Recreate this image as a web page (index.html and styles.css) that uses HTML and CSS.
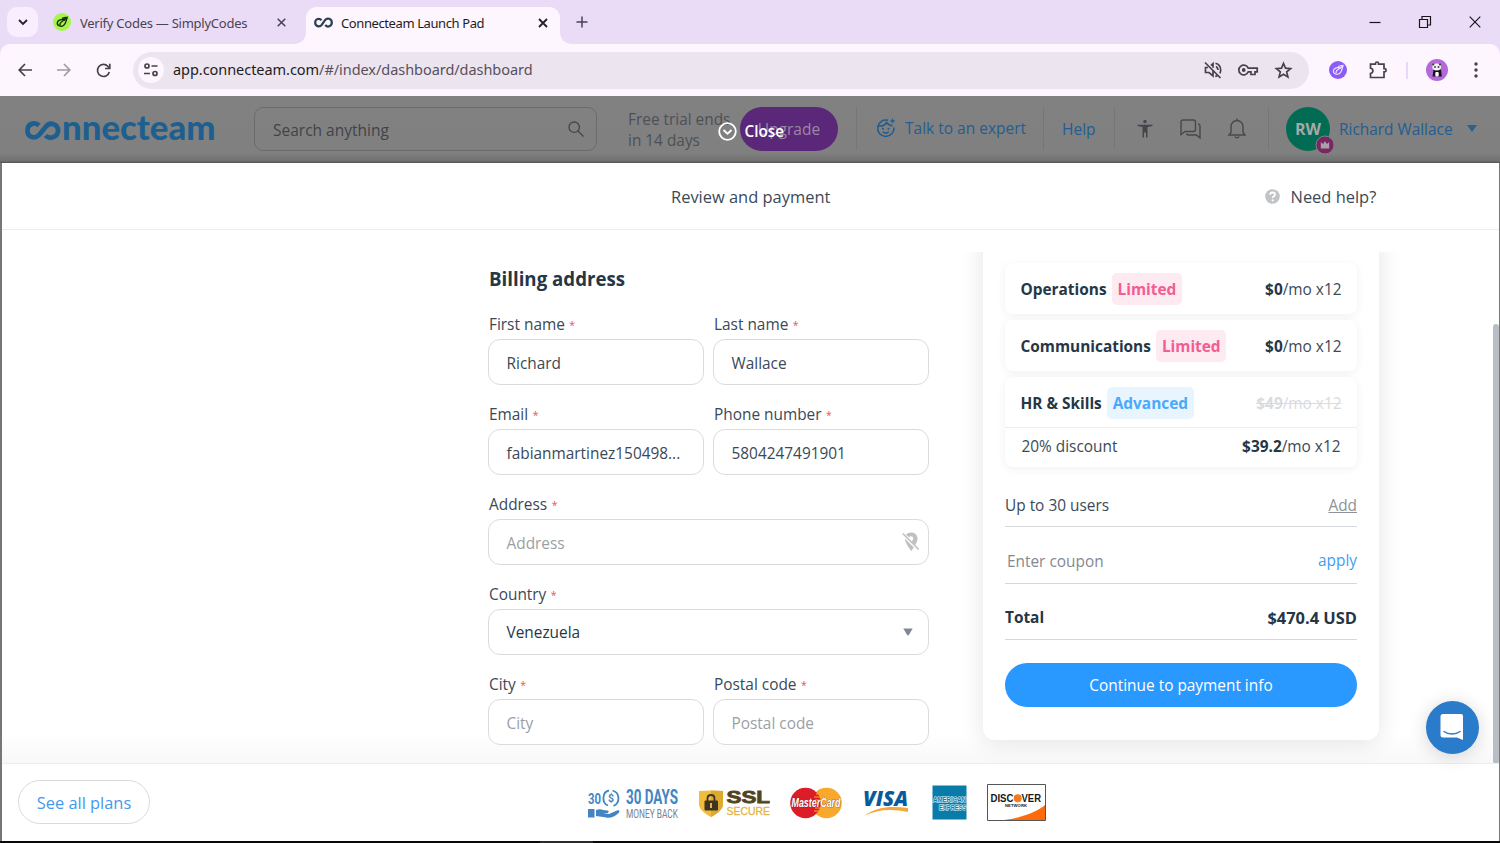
FILE: index.html
```html
<!DOCTYPE html>
<html lang="en">
<head>
<meta charset="utf-8">
<title>Connecteam Launch Pad</title>
<link rel="stylesheet" href="styles.css">
</head>
<body>
<div class="browser">
  <div class="tabstrip">
    <div class="tab-search"><svg width="10" height="7" viewBox="0 0 10 7"><path d="M1 1l4 4 4-4" class="ink"/></svg></div>
    <div class="tab">
      <svg width="18" height="18" viewBox="0 0 18 18"><circle cx="9" cy="9" r="9" fill="#a5f54b"/><path d="M12 7.500C9 5.500 4.500 7 4.300 10s4 4 6.200 2.500S13 8.500 14 4.800L9 8.500c-2 1.500-2.500 2.500-1.500 3.500M9 5.500l4.500-1.200" fill="none" stroke="#19310d" stroke-width="1.400"/></svg>
      <span class="tab-title muted">Verify Codes — SimplyCodes</span>
      <svg class="x1" width="9" height="9" viewBox="0 0 9 9"><path d="M.7.7l7.600 7.600M8.300.7L.7 8.300" class="ink thin"/></svg>
    </div>
    <div class="tab active">
      <svg width="19" height="12" viewBox="0 0 19 12"><path d="M7.500 3.200C5.500.7 1.200 1.700 1.200 5.500s4.300 5.200 6.500 2.300l3.300-4.600c2.300-3 6.800-1.500 6.800 2.300S13.500 11 11.300 7.800" fill="none" stroke="#2b3f50" stroke-width="2.200"/></svg>
      <span class="tab-title on">Connecteam Launch Pad</span>
      <svg class="x2" width="10" height="10" viewBox="0 0 10 10"><path d="M1 1l8 8M9 1L1 9" class="ink"/></svg>
    </div>
    <svg class="plus" width="12" height="12" viewBox="0 0 12 12"><path d="M6 .5v11M.5 6h11" class="ink thin"/></svg>
    <div class="win">
      <svg width="12" height="12" viewBox="0 0 12 12"><path d="M.5 6.500h11" class="hair"/></svg>
      <svg width="12" height="12" viewBox="0 0 12 12"><path d="M.5 3.500h8v8h-8zM3 3.500v-3h8.500V9h-3" class="hair"/></svg>
      <svg width="12" height="12" viewBox="0 0 12 12"><path d="M.7.7l10.600 10.600M11.300.7L.7 11.300" class="hair"/></svg>
    </div>
  </div>

  <div class="toolbar">
    <svg width="14" height="14" viewBox="0 0 14 14"><path d="M14 7H1.500M7 1L1.200 7 7 13" class="nav"/></svg>
    <svg class="fwd" width="14" height="14" viewBox="0 0 14 14"><path d="M0 7h12.500M7 1l5.800 6L7 13" class="nav"/></svg>
    <svg class="reload" width="15" height="15" viewBox="0 0 15 15"><path d="M13.300 9A6 6 0 1 1 12 3.500L13.500 5M13.800.8v4.700H9" class="nav"/></svg>
    <div class="omnibox">
      <div class="site"><svg width="16" height="14" viewBox="0 0 16 14"><circle cx="4" cy="3" r="2" class="nav"/><path d="M8.500 3h6M1 10.500h6" class="nav"/><circle cx="12" cy="10.500" r="2" class="nav"/></svg></div>
      <span class="url">app.connecteam.com<i>/#/index/dashboard/dashboard</i></span>
      <svg width="18" height="18" viewBox="0 0 18 18"><path d="M1 1.500l15.500 15.500M4 6.500H1.500v5H5l4 3.500V9M7 4.500l2-1.800v4M12 5.500c1.300.8 2 1.800 2 3.500M11.500 2.200c3.600 1 5.200 3.600 5.200 6.800 0 1.300-.3 2.300-.8 3.300M11.300 15.500l2-.9" class="nav"/></svg>
      <svg class="key" width="20" height="12" viewBox="0 0 20 12"><path d="M10.300 4.200A4.900 4.900 0 1 0 10.300 7.800H13v2.700h4V7.800h2.200V4.200z" class="nav"/><circle cx="5.700" cy="6" r="1.900" fill="#474249"/></svg>
      <svg class="star" width="17" height="16" viewBox="0 0 17 16"><path d="M8.500 1.500l2 4.700 5.100.4-3.900 3.300 1.200 5-4.400-2.700-4.400 2.700 1.200-5L1.400 6.600l5.100-.4z" class="nav"/></svg>
    </div>
    <svg class="ext" width="18" height="18" viewBox="0 0 18 18"><circle cx="9" cy="9" r="9" fill="#8b5cf6"/><path d="M12 7.500C9 5.500 4.500 7 4.300 10s4 4 6.200 2.500S13 8.500 14 4.800L9 8.500c-2 1.500-2.500 2.500-1.500 3.500M9 5.500l4.500-1.200" fill="none" stroke="#f3eaff" stroke-width="1.100"/></svg>
    <svg class="puzzle" width="18" height="18" viewBox="0 0 18 18"><path d="M1.500 3.200h5V2.500a1.500 1.500 0 0 1 3 0v.7h5.500v4.500h.5a1.600 1.600 0 0 1 0 3.200H15v5.600H1.500v-4c3.200-.7 3.200-4.800 0-5.400z" class="nav"/></svg>
    <span class="bar"></span>
    <svg class="panda" width="22" height="22" viewBox="0 0 22 22"><circle cx="11" cy="11" r="11" fill="#b36ad8"/><path d="M7.500 10.500h7.500l.8 7H6.500z" fill="#17131b"/><ellipse cx="10.700" cy="8" rx="4.400" ry="3.400" fill="#f5f0f5"/><circle cx="7.300" cy="5.500" r="1" fill="#333"/><circle cx="14" cy="5.500" r="1" fill="#333"/><ellipse cx="9" cy="8" rx="1" ry=".7"/><ellipse cx="12.500" cy="8" rx="1" ry=".7"/><rect x="9.300" y="13" width="3.400" height="4.500" rx="1" fill="#fff"/></svg>
    <svg class="dots" width="4" height="16" viewBox="0 0 4 16"><g fill="#474249"><circle cx="2" cy="2" r="1.700"/><circle cx="2" cy="8" r="1.700"/><circle cx="2" cy="14" r="1.700"/></g></svg>
  </div>
</div>

<div class="app">
  <header class="apphead">
    <svg class="logo" width="192" height="30" viewBox="0 0 192 30"><path d="M15 11.500C11 7.500 3.500 9.500 3.500 16.500S11 25.500 15.500 20.500l6.500-8C26 7.500 34 10 34 16.500S25.500 26 21.500 21.500" fill="none" stroke="#1d6090" stroke-width="4.800"/><text x="38" y="25.500" textLength="153.500" lengthAdjust="spacingAndGlyphs" class="logotext">nnecteam</text></svg>
    <div class="search"><span>Search anything</span><svg width="16" height="16" viewBox="0 0 16 16"><circle cx="6.200" cy="6.200" r="5.200" class="gl"/><path d="M10 10l5.500 5.500" class="gl"/></svg></div>
    <div class="trial">Free trial ends<br>in 14 days</div>
    <div class="upgrade">Upgrade</div>
    <span class="sep s1"></span>
    <div class="expert"><svg width="20" height="20" viewBox="0 0 20 20"><path d="M12 2.300A8.200 8.200 0 1 0 18 9.500M2.500 8C6 8.500 9 7 10.500 4.500c1.500 2 3.500 3.200 6 3.300M6.800 13.800c1.800 1.600 4.300 1.600 6 0" fill="none" stroke="#205b90" stroke-width="1.500"/><circle cx="7" cy="10.700" r="1" fill="#205b90"/><circle cx="12.500" cy="10.700" r="1" fill="#205b90"/><path d="M16.500 0l.8 2.200 2.200.8-2.200.8-.8 2.200-.8-2.200-2.200-.8 2.200-.8z" fill="#205b90"/></svg><span>Talk to an expert</span></div>
    <span class="sep"></span>
    <div class="help">Help</div>
    <span class="sep"></span>
    <div class="tools">
      <svg width="16" height="20" viewBox="0 0 16 20"><circle cx="8" cy="2.500" r="1.700" fill="#43464b"/><path d="M.5 5.700h15v1.400L10.500 8v10.500H9v-5H7v5H5.500V8L.5 7.100z" fill="#43464b"/></svg>
      <svg width="21" height="20" viewBox="0 0 21 20"><path d="M3 1h10.500a2 2 0 0 1 2 2v7.500a2 2 0 0 1-2 2H5l-4 3V3a2 2 0 0 1 2-2zM18 5h.2a2 2 0 0 1 1.800 2v12l-3.500-3H8.500a2 2 0 0 1-2-1.500" class="gl"/></svg>
      <svg width="18" height="21" viewBox="0 0 18 21"><path d="M9 .5v2M1 17h16l-2-2.500V8.500a6 6 0 0 0-12 0v6zM7 18.500c.7 1.800 3.300 1.800 4 0" class="gl"/></svg>
    </div>
    <span class="sep s2"></span>
    <div class="avatar">RW<svg class="crown" width="20" height="20" viewBox="0 0 20 20"><circle cx="10" cy="10" r="9" fill="#792760" stroke="#858087"/><path d="M5.800 7l2.200 2 2-2.700L12 9l2.200-2v6.500H5.800z" fill="#aaa0a9"/></svg></div>
    <span class="name">Richard Wallace</span>
    <svg class="caret" width="10" height="7" viewBox="0 0 10 7"><path d="M0 0h10L5 7z" fill="#29628f"/></svg>
    <div class="close"><svg width="19" height="19" viewBox="0 0 19 19"><circle cx="9.500" cy="9.500" r="8.300" fill="none" stroke="#fff" stroke-width="1.800"/><path d="M5.500 8l4 3.700 4-3.700" fill="none" stroke="#fff" stroke-width="1.800"/></svg><b>Close</b></div>
  </header>

  <main class="modal">
    <div class="modalhead"><span class="title">Review and payment</span><span class="need"><svg width="15" height="15" viewBox="0 0 15 15"><circle cx="7.500" cy="7.500" r="7.300" fill="#c2c3c6"/><path d="M5.100 5.800c.1-3.200 4.900-2.900 4.900-.3 0 1.700-2.300 1.700-2.300 3.400" fill="none" stroke="#fff" stroke-width="1.800"/><circle cx="7.700" cy="11.300" r="1.100" fill="#fff"/></svg><span>Need help?</span></span></div>
    <div class="scroll">
      <section class="form">
        <h2>Billing address</h2>
        <div class="grid">
          <label><span>First name <em>*</em></span><div class="input">Richard</div></label>
          <label><span>Last name <em>*</em></span><div class="input">Wallace</div></label>
          <label><span>Email <em>*</em></span><div class="input email">fabianmartinez150498...</div></label>
          <label><span>Phone number <em>*</em></span><div class="input">5804247491901</div></label>
          <label class="wide"><span>Address <em>*</em></span><div class="input ph">Address<svg width="18" height="20" viewBox="0 0 18 20"><path d="M4 3c3-4.300 11.500-2.800 11.500 3.500 0 2-.9 4.200-2.200 6.500l-3.800-3.800q2-1 1.800-3c-.3-2-2.300-2.700-4.300-1.200zM2.800 6.500l9 9L9.300 19C6 14.500 3 10.500 2.800 6.500z" fill="#bfc0c2"/><path d="M.8 1.500l16 16" stroke="#bfc0c2" stroke-width="1.700"/></svg></div></label>
          <label class="wide"><span>Country <em>*</em></span><div class="input sel">Venezuela<svg width="10" height="8" viewBox="0 0 10 8"><path d="M.3.500h9.400L6 6.800q-1 1.200-2 0z" fill="#818892"/></svg></div></label>
          <label><span>City <em>*</em></span><div class="input ph">City</div></label>
          <label><span>Postal code <em>*</em></span><div class="input ph">Postal code</div></label>
        </div>
      </section>
      <aside class="summary">
        <div class="plan"><div class="line"><strong>Operations</strong><span class="tag pink">Limited</span><span class="price"><b>$0</b>/mo x12</span></div></div>
        <div class="plan"><div class="line"><strong>Communications</strong><span class="tag pink">Limited</span><span class="price"><b>$0</b>/mo x12</span></div></div>
        <div class="plan"><div class="line hr"><strong>HR &amp; Skills</strong><span class="tag blue">Advanced</span><span class="price old"><b>$49</b>/mo x12</span></div>
          <div class="discount"><span>20% discount</span><span><b>$39.2</b>/mo x12</span></div></div>
        <div class="row users"><span>Up to 30 users</span><u>Add</u></div>
        <div class="row coupon"><span>Enter coupon</span><a>apply</a></div>
        <div class="row total"><b>Total</b><b class="sum">$470.4 USD</b></div>
        <div class="cta">Continue to payment info</div>
      </aside>
      <span class="thumb"></span>
    </div>
    <footer>
      <div class="plans">See all plans</div>
      <div class="badges">
        <svg width="92" height="34" viewBox="0 0 92 34"><g class="cond" fill="#4385c2"><text x="0" y="18" font-size="15.500" textLength="13" lengthAdjust="spacingAndGlyphs">30</text><text x="38" y="18" font-size="20.500" textLength="52" lengthAdjust="spacingAndGlyphs">30 DAYS</text><text x="20" y="16" font-size="11" textLength="6" lengthAdjust="spacingAndGlyphs">$</text></g><text x="38" y="31.500" font-size="13.500" fill="#7a828a" textLength="52" lengthAdjust="spacingAndGlyphs" class="thincond">MONEY BACK</text><path d="M21 4.500c-7 1.500-7.500 12.500-1 15M24.500 4.500c7.500 2 8 12.500 1 15.300" fill="none" stroke="#4385c2" stroke-width="1.800"/><path d="M0 23h6.500v8.500H0zM8 24c5-2 7 .5 11 .5 2.500 0 2 2.500 0 2.500h-4l6 1 8-3.500c3-.8 3 1.500 1 3-5 4-8 5-13 3.700L8 30z" fill="#4385c2"/></svg>
        <svg class="ssl" width="74" height="32" viewBox="0 0 74 32"><path d="M1 4q12-1 24 0v13c0 6-7 10.500-12 13C8 27.500 1 23 1 17z" fill="#f0bd3d"/><path d="M13 3.500q6 0 12 .5v13c0 6-7 10.500-12 13z" fill="#dda92f"/><path d="M9.500 14v-2.500c0-4.700 7-4.700 7 0V14" fill="none" stroke="#3d3421" stroke-width="1.800"/><rect x="6.500" y="13.500" width="13.500" height="10" rx="1" fill="#3d3421"/><path d="M13 16v5" stroke="#e8b540" stroke-width="2"/><text x="28.500" y="15.500" font-size="17" textLength="43.500" lengthAdjust="spacingAndGlyphs" class="heavy ssltext">SSL</text><text x="28.500" y="27.500" font-size="11.500" textLength="43.500" lengthAdjust="spacingAndGlyphs" class="med secure">SECURE</text></svg>
        <svg class="mc" width="52" height="32" viewBox="0 0 52 32"><circle cx="36.500" cy="16" r="15.300" fill="#f8a92b"/><circle cx="15.500" cy="16" r="15.300" fill="#dc1c27"/><path d="M26 7h5M24 10h8M25 13h8M25 21h8M24 24h8M26 27h4" stroke="#f8a92b" stroke-width="1.200"/><text x="1.500" y="20" textLength="49" lengthAdjust="spacingAndGlyphs" class="mcard">MasterCard</text></svg>
        <svg class="visa" width="48" height="30" viewBox="0 0 48 30"><text x="1" y="17.500" font-size="21" textLength="45" lengthAdjust="spacingAndGlyphs" class="visat">VISA</text><path d="M2 28C15 18 30 18 46 20v4C30 20.500 16 21 2 28z" fill="#f0a83b"/></svg>
        <svg class="amex" width="35" height="35" viewBox="0 0 35 35"><path d="M.5.5h34v34H.5z" fill="#087ba8"/><text x="1" y="17" font-size="7.500" textLength="33" lengthAdjust="spacingAndGlyphs" class="am">AMERICAN</text><text x="7" y="24.500" font-size="7.500" textLength="27.500" lengthAdjust="spacingAndGlyphs" class="am">EXPRESS</text></svg>
        <svg class="disc" width="59" height="37" viewBox="0 0 59 37"><path d="M.5.5h58v36H.5z" fill="#fff" stroke="#555"/><path d="M58 21v15H17C33 34 48 29 58 21z" fill="#ff6b0b"/><g class="heavy" fill="#17181a"><text x="3.500" y="18" font-size="11.500" textLength="23" lengthAdjust="spacingAndGlyphs">DISC</text><text x="34.500" y="18" font-size="11.500" textLength="19.500" lengthAdjust="spacingAndGlyphs">VER</text><text x="18" y="23.300" font-size="4.200" textLength="22" lengthAdjust="spacing">NETWORK</text></g><circle cx="30.700" cy="14.200" r="4" fill="#f47920"/></svg>
      </div>
    </footer>
    <div class="chat"><svg width="26" height="28" viewBox="0 0 26 28"><path d="M4 1h18a2 2 0 0 1 2 2v24l-6-2.500H4a2.500 2.500 0 0 1-2.500-2.500V3.500A2.500 2.500 0 0 1 4 1z" fill="#fff"/><path d="M5 18.500c4.500 3.300 11.500 3.300 16 0" fill="none" stroke="#2a7bc9" stroke-width="1.500" stroke-linecap="round"/></svg></div>
  </main>
  <div class="taskbar"><span></span></div>
</div>
</body>
</html>
```
FILE: styles.css
```css
* { box-sizing: border-box; }
body { margin: 0; width: 1500px; height: 843px; overflow: hidden; font-family: "Open Sans", sans-serif; background: #fff; color: #3b4957; }
svg { display: block; flex: none; overflow: visible; }
span, b, strong, div { white-space: nowrap; }

/* browser chrome */
.browser { height: 96px; background: #eadcf6; font-family: "Noto Sans", sans-serif; }
.tabstrip { display: flex; align-items: center; height: 44px; padding-left: 7px; }
.tab-search { width: 31px; height: 30px; border-radius: 10px; background: #f8eefe; display: flex; align-items: center; justify-content: center; margin-right: 15px; }
.ink { fill: none; stroke: #28242c; stroke-width: 1.900; }
.thin { stroke: #49424f; stroke-width: 1.500; }
.hair { fill: none; stroke: #17151a; stroke-width: 1.200; }
.tab { display: flex; align-items: center; }
.tab-title { font-size: 13px; letter-spacing: -.25px; line-height: 20px; margin-left: 9px; padding-top: 1px; color: #1f1c22; }
.tab-title.muted { width: 197px; color: #4b4352; }
.tab-title.on { width: 197px; margin-left: 8px; letter-spacing: -.4px; }
.tab.active { align-self: flex-end; height: 37px; width: 254px; margin-left: 20px; padding: 0 0 6px 8px; border-radius: 11px 11px 0 0; background: #fdf6fe; position: relative; }
.tab.active::before, .tab.active::after { content: ""; position: absolute; bottom: 0; width: 11px; height: 11px; }
.tab.active::before { left: -11px; background: radial-gradient(circle at 0 0, transparent 10.500px, #fdf6fe 11px); }
.tab.active::after { right: -11px; background: radial-gradient(circle at 100% 0, transparent 10.500px, #fdf6fe 11px); }
.plus { margin-left: 16px; }
.win { display: flex; gap: 38px; margin-left: auto; margin-right: 19px; }
.toolbar { display: flex; align-items: center; height: 52px; background: #fdf6fe; border-radius: 10px 10px 0 0; padding-left: 18px; }
.nav { fill: none; stroke: #474249; stroke-width: 1.700; }
.fwd { margin-left: 25px; opacity: .5; }
.reload { margin-left: 25px; }
.omnibox { display: flex; align-items: center; width: 1176px; height: 37px; border-radius: 19px; background: #ece5f0; margin-left: 22px; padding-left: 5px; }
.site { width: 26px; height: 26px; border-radius: 50%; background: #fdf6fe; display: flex; align-items: center; justify-content: center; }
.url { width: 1031px; margin-left: 9px; font-size: 14.500px; letter-spacing: -.05px; line-height: 22px; padding-bottom: 2px; color: #1f1c22; }
.url i { font-style: normal; color: #57505c; }
.key { margin-left: 16px; }
.star { margin-left: 17px; }
.ext { margin-left: 20px; }
.puzzle { margin-left: 22px; }
.bar { width: 2px; height: 17px; background: #e7d8f7; margin-left: 19px; }
.panda { margin-left: 18px; }
.dots { margin-left: 26px; }

/* dimmed application header */
.app { height: 747px; background: #777; }
.apphead { position: relative; height: 67px; padding: 0 0 2px 24px; display: flex; align-items: center; background: linear-gradient(#828182 0, #808080 85%, #707070 97%, #505050 100%); font-size: 15.500px; color: #4d5054; }
.logotext { font-family: Lato, sans-serif; font-weight: 900; font-size: 34px; fill: #1d6090; }
.search { width: 343px; height: 44px; margin-left: 38px; padding: 2px 12px 0 18px; display: flex; align-items: center; justify-content: space-between; border: 1px solid #6b6b6c; border-radius: 9px; color: #414347; }
.search svg { margin-bottom: 2px; }
.trial { width: 112px; margin-left: 31px; font-size: 15.400px; line-height: 21px; padding-top: 2px; }
.gl { fill: none; stroke: #45484d; stroke-width: 1.400; }
.upgrade { width: 98px; height: 44px; border-radius: 22px; background: #5a2779; color: #9a88a4; display: flex; align-items: center; justify-content: center; }
.sep { width: 1px; height: 43px; background: #757677; }
.s1 { margin-left: 18px; }
.expert { width: 186px; display: flex; align-items: center; gap: 9px; padding: 0 0 2px 19px; color: #235d91; }
.help { width: 70px; padding-left: 18px; color: #235d91; }
.tools { width: 153px; display: flex; align-items: center; gap: 27px; padding-left: 22px; }
.avatar { position: relative; width: 44px; height: 44px; border-radius: 50%; margin-left: 17px; background: #026b53; color: #a5aaa8; font-size: 16px; font-weight: 700; display: flex; align-items: center; justify-content: center; }
.crown { position: absolute; left: 29px; top: 28px; }
.name { width: 126px; margin-left: 9px; font-size: 15.400px; color: #235d91; padding-top: 1px; }
.caret { margin-left: 2px; }
.close { position: absolute; left: 718px; top: 24px; display: flex; align-items: center; gap: 7.500px; color: #fff; font-size: 15.300px; line-height: 22px; }
.close b { font-weight: 600; }

/* checkout modal */
.modal { position: relative; width: 1497px; height: 678px; margin-left: 2px; background: #fff; }
.modalhead { display: flex; align-items: center; height: 67px; border-bottom: 1px solid #ececec; font-size: 16.450px; padding-top: 1px; }
.title { width: 594px; margin-left: 669px; }
.need { display: flex; align-items: center; gap: 10.500px; }
.scroll { position: relative; display: flex; align-items: flex-start; height: 512px; margin-top: 22px; overflow: hidden; border-bottom: 1px solid #ededed; background: linear-gradient(#fff 480px, #f8f8f8 511px); }
.form { width: 441px; margin-left: 486px; padding-top: 14px; }
.form h2 { margin: 0; font-size: 18.700px; line-height: 26px; color: #253746; padding-left: 1px; }
.grid { display: grid; grid-template-columns: 216px 216px; column-gap: 9px; margin-top: 22px; }
label { display: block; height: 90px; font-size: 15.400px; }
label > span { display: block; height: 25px; line-height: 22px; padding-left: 1px; }
em { color: #f0504e; font-style: normal; font-size: 10.500px; position: relative; top: -1px; margin-left: .5px; }
.wide { grid-column: span 2; }
.input { height: 46px; border: 1px solid #d9dbde; border-radius: 12px; background: #fff; display: flex; align-items: center; justify-content: space-between; padding: 2px 8px 0 17.500px; }
.input svg { margin-bottom: 2px; }
.ph { color: #9b9fa5; }
.sel { padding: 1px 15px 0 17.500px; color: #253746; }
.summary { width: 396px; height: 508px; margin: -20px 0 0 54px; padding: 31px 22px 0; border-radius: 12px; background: #fff; box-shadow: 0 2px 24px rgba(0,0,0,.11); font-size: 15.400px; }
.plan { margin-bottom: 6px; border-radius: 8px; box-shadow: 0 2px 10px rgba(0,0,0,.06); background: #fff; }
.line { display: flex; align-items: center; height: 51px; padding: 1px 15.500px 0; }
.line.hr { height: 50px; padding-top: 2px; }
.line strong, .price { padding-top: 1px; }
.plan strong, .summary b { color: #253746; }
.tag { height: 32px; line-height: 33px; margin-left: 5.500px; padding: 0 5.500px; border-radius: 5px; font-weight: 700; }
.pink { color: #f25d93; background: #feeaf1; }
.blue { color: #4aa9fa; background: #e8f4fe; }
.price { margin-left: auto; }
.summary .old, .summary .old b { color: #d9dbdd; text-decoration: line-through; }
.discount { display: flex; justify-content: space-between; height: 40px; line-height: 37px; padding: 0 16.500px; border-top: 1px solid #ededee; }
.row { display: flex; justify-content: space-between; border-bottom: 1px solid #d6d8da; }
.users { height: 42px; line-height: 42px; margin-top: 18px; }
.users u { color: #8e9299; }
.coupon { height: 57px; line-height: 69px; }
.coupon span { padding-left: 2px; color: #85898f; }
.coupon a { line-height: 68px; color: #3f9cf5; }
.total { height: 56px; line-height: 68px; }
.total .sum { font-size: 16.450px; line-height: 67px; }
.cta { height: 44px; margin-top: 23px; padding-top: 1px; border-radius: 22px; background: #2998ff; color: #fff; display: flex; align-items: center; justify-content: center; }
.thumb { position: absolute; right: 0; top: 72px; width: 6px; height: 440px; border-radius: 3px; background: #b9bdc5; }
footer { display: flex; align-items: center; height: 77px; padding-left: 16px; background: #fff; }
.plans { width: 132px; height: 44px; margin-bottom: 1px; padding-top: 1px; border: 1px solid #d9dbe0; border-radius: 22px; color: #4498ee; font-size: 16.400px; display: flex; align-items: center; justify-content: center; }
.badges { display: flex; align-items: center; margin-left: 438px; }
.cond { font-family: Roboto, sans-serif; font-weight: 700; }
.thincond { font-family: Roboto, sans-serif; font-weight: 400; }
.heavy { font-family: "Liberation Sans", sans-serif; font-weight: 700; }
.ssltext { fill: #50441e; stroke: #50441e; stroke-width: .8px; }
.med { font-family: "Liberation Sans", sans-serif; }
.secure { fill: #e5b43e; stroke: #e5b43e; stroke-width: .3px; }
.mcard { font: italic 700 12px "Liberation Sans", sans-serif; fill: #fff; stroke: #6f1c1c; stroke-width: .6px; paint-order: stroke; }
.visat { font-family: "Open Sans", sans-serif; font-weight: 800; font-style: italic; fill: #075a9c; }
.am { font-family: "Liberation Sans", sans-serif; font-weight: 700; fill: #087ba8; stroke: #e8f5fa; stroke-width: 1.200px; paint-order: stroke; }
.ssl { margin-left: 18px; }
.mc { margin-left: 18px; }
.visa { margin-left: 20px; }
.amex { margin-left: 22px; }
.disc { margin-left: 20px; }
.chat { position: absolute; left: 1423.500px; top: 537.500px; width: 53px; height: 53px; border-radius: 50%; background: #2a7bc9; box-shadow: 0 2px 18px rgba(0,0,0,.16); display: flex; align-items: center; justify-content: center; }
.taskbar { height: 2px; background: #080908; display: flex; }
.taskbar span { width: 53px; height: 2px; margin-left: 540px; background: #292a29; }
```
